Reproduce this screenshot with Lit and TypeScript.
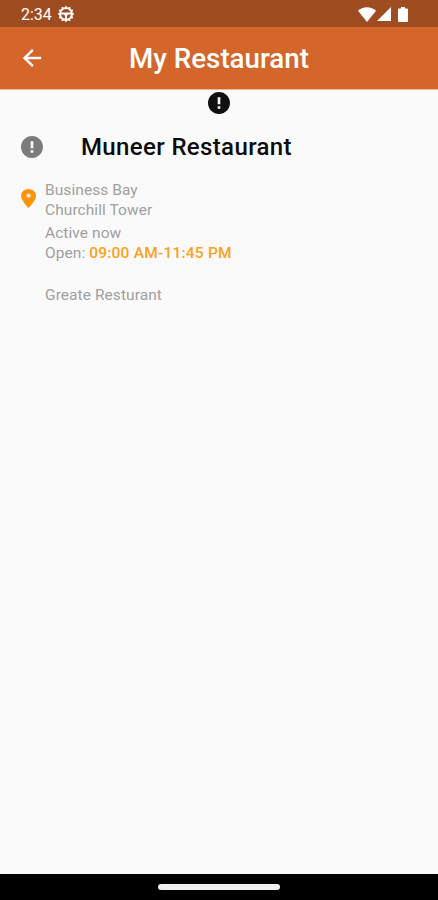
import { LitElement, html, css, svg } from "lit";
import { customElement } from "lit/decorators.js";

const ERROR_PATH =
  "M12 2C6.48 2 2 6.48 2 12s4.48 10 10 10 10-4.48 10-10S17.52 2 12 2zm1.2 15.300h-2.400v-2.400h2.400v2.400zm0-4.100h-2.400V6.700h2.400v6.500z";

const errorIcon = (cls: string) => html`
  <svg class=${cls} viewBox="2 2 20 20"><path d=${ERROR_PATH} /></svg>
`;

const teeth = Array.from({ length: 12 }, (_, i) => i * 30);

@customElement("status-bar")
class StatusBar extends LitElement {
  static styles = css`
    :host {
      display: flex;
      align-items: center;
      height: 27px;
      padding: 1px 30px 0 21px;
      box-sizing: border-box;
      background: #9f4c20;
      color: #fff;
    }
    svg { display: block; fill: #fff; }
    .time { font-size: 16px; line-height: 26px; width: 37px; padding-top: 1px; white-space: nowrap; }
    .gear { width: 16px; height: 16px; }
    .gear .line { fill: none; stroke: #fff; }
    .right { display: flex; align-items: center; margin-left: auto; }
    .wifi { width: 18px; height: 15px; }
    .signal { width: 14px; height: 14px; margin-left: 1px; }
    .battery { width: 10px; height: 15px; margin-left: 7px; }
  `;
  render() {
    return html`
      <span class="time">2:34</span>
      <svg class="gear" viewBox="0 0 16 16">
        <circle class="line" cx="8" cy="8" r="6" stroke-width="2" />
        ${teeth.map(
          (a) => svg`<rect x="7.2" y="0.1" width="1.6" height="1.6" transform="rotate(${a} 8 8)" />`
        )}
        <path class="line" stroke-width="2" d="M2 7.500h12" />
        <path d="M5.500 7.500h5L9 10v4H7v-4z" />
      </svg>
      <div class="right">
        <svg class="wifi" viewBox="0 0 17 14" preserveAspectRatio="none">
          <path d="M8.5 14 0 3.6C2.3 1.5 5.2.3 8.5.3s6.2 1.2 8.5 3.3z" />
        </svg>
        <svg class="signal" viewBox="0 0 14 14"><path d="M0 14 14 0v14z" /></svg>
        <svg class="battery" viewBox="0 0 10 15">
          <path d="M3 0h4v1.500h1.800c.7 0 1.200.5 1.200 1.200v11c0 .7-.5 1.300-1.200 1.300H1.200C.5 15 0 14.400 0 13.700v-11C0 2 .5 1.500 1.200 1.500H3z" />
        </svg>
      </div>
    `;
  }
}

@customElement("app-root")
class AppRoot extends LitElement {
  static styles = css`
    :host {
      display: flex;
      flex-direction: column;
      height: 900px;
      background: #fafafa;
      font-family: Roboto, "Liberation Sans", sans-serif;
      overflow: hidden;
    }
    svg { display: block; }
    .bar {
      display: grid;
      grid-template-columns: 22px 1fr 22px;
      align-items: center;
      height: 63px;
      padding: 1px 21px;
      box-sizing: border-box;
      background: #d5662b;
      border-bottom: 1px solid #eab79d;
      color: #fff;
    }
    .back { width: 22px; height: 18px; fill: #fff; stroke: #fff; stroke-width: 0.4; }
    h1 {
      margin: 0;
      padding-top: 1px;
      text-align: center;
      font-size: 27.75px;
      font-weight: 500;
      line-height: 32px;
      white-space: nowrap;
    }
    main { flex: 1; }
    .alert { width: 22px; height: 22px; margin: 2px auto 0; fill: #101010; }
    .heading { display: flex; align-items: center; height: 32px; margin-top: 17px; padding-left: 21px; }
    .avatar { width: 22px; height: 22px; fill: #7c7c7c; }
    h2 {
      margin: 0 0 0 38px;
      color: #0c0c0c;
      font-size: 24px;
      font-weight: 500;
      line-height: 32px;
      letter-spacing: 0.36px;
      white-space: nowrap;
    }
    .info { display: flex; margin-top: 18px; padding-left: 21px; }
    .pin { width: 15px; height: 19px; margin: 8px 9px 0 0; fill: #ff9409; }
    p { margin: 0; color: #a0a0a0; font-size: 15.5px; line-height: 19.5px; letter-spacing: 0.07px; white-space: nowrap; }
    .status { margin-top: 4px; }
    .note { margin-top: 23px; }
    b { color: #ff9f1c; font-weight: 500; letter-spacing: 0.22px; }
    .nav { display: flex; justify-content: center; height: 26px; padding-top: 10px; box-sizing: border-box; background: #000; }
    .handle { width: 122px; height: 6px; border-radius: 3px; background: #f0f0f0; }
  `;
  render() {
    return html`
      <status-bar></status-bar>
      <header class="bar">
        <svg class="back" viewBox="0 0 22 18">
          <path d="M20 8H6.200l6.300-6.300L11 .300 2 9l9 8.700 1.500-1.400L6.200 10H20z" />
        </svg>
        <h1>My Restaurant</h1>
      </header>
      <main>
        ${errorIcon("alert")}
        <div class="heading">
          ${errorIcon("avatar")}
          <h2>Muneer Restaurant</h2>
        </div>
        <div class="info">
          <svg class="pin" viewBox="5 2 14 20" preserveAspectRatio="none">
            <path d="M12 2C8.130 2 5 5.130 5 9c0 5.250 7 13 7 13s7-7.750 7-13c0-3.870-3.130-7-7-7zm0 9a2 2 0 1 1 0-4 2 2 0 0 1 0 4z" />
          </svg>
          <div>
            <p>Business Bay</p>
            <p>Churchill Tower</p>
            <p class="status">Active now</p>
            <p>Open: <b>09:00 AM-11:45 PM</b></p>
            <p class="note">Greate Resturant</p>
          </div>
        </div>
      </main>
      <footer class="nav"><div class="handle"></div></footer>
    `;
  }
}
